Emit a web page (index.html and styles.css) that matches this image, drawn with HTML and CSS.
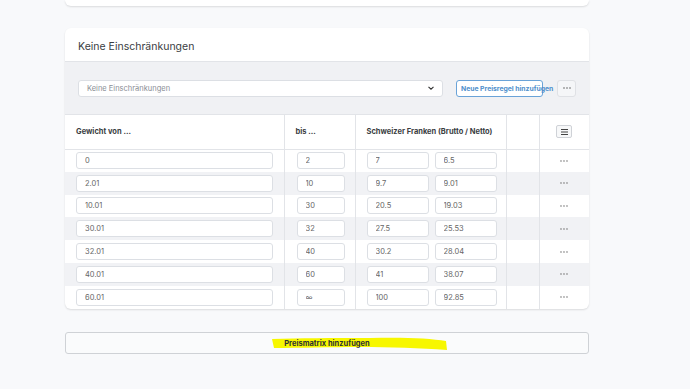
FILE: index.html
```html
<!DOCTYPE html>
<html lang="de">
<head>
    <meta charset="UTF-8">
    <title>Preismatrix</title>
    <link rel="stylesheet" href="styles.css">
</head>
<body>
    <div class="page">
        <div class="card card-prev"></div>

        <div class="card">
            <div class="card-head">Keine Einschränkungen</div>

            <div class="toolbar">
                <div class="select">
                    <span>Keine Einschränkungen</span>
                    <svg width="8" height="8" viewBox="0 0 8 8"><path d="M1.5 2.8 L4 5.2 L6.5 2.8" fill="none" stroke="#333" stroke-width="1.1"/></svg>
                </div>
                <button class="btn-outline">Neue Preisregel hinzufügen</button>
                <button class="btn-dots">
                    <svg width="8" height="2" viewBox="0 0 8 2"><circle cx="1" cy="1" r="0.7" fill="#444"/><circle cx="4" cy="1" r="0.7" fill="#444"/><circle cx="7" cy="1" r="0.7" fill="#444"/></svg>
                </button>
            </div>

            <table class="matrix">
                <thead>
                    <tr>
                        <th class="c1">Gewicht von ...</th>
                        <th class="c2">bis ...</th>
                        <th class="c3">Schweizer Franken (Brutto / Netto)</th>
                        <th class="c4"></th>
                        <th class="c5">
                            <span class="menu-btn">
                                <svg width="7" height="6" viewBox="0 0 7 6"><path d="M0 0.5H7M0 3H7M0 5.5H7" stroke="#444" stroke-width="1"/></svg>
                            </span>
                        </th>
                    </tr>
                </thead>
                <tbody id="rows"></tbody>
            </table>
        </div>

        <div class="add-wrap">
            <button class="btn-add">
                <svg class="marker" width="180" height="18" viewBox="0 0 180 18"><path d="M2 4 C 30 3, 60 3, 100 3 C 130 2, 160 3, 176 6 L 177 15 C 150 13, 120 12, 90 12 C 60 12, 30 13, 4 13 Z" fill="#f7f700"/></svg>
                <span>Preismatrix hinzufügen</span>
            </button>
        </div>
    </div>

    <script>
        const data = [
            ["0", "2", "7", "6.5"],
            ["2.01", "10", "9.7", "9.01"],
            ["10.01", "30", "20.5", "19.03"],
            ["30.01", "32", "27.5", "25.53"],
            ["32.01", "40", "30.2", "28.04"],
            ["40.01", "60", "41", "38.07"],
            ["60.01", "∞", "100", "92.85"]
        ];
        const dots = '<svg class="row-dots" width="8" height="2" viewBox="0 0 8 2"><circle cx="1" cy="1" r="0.65" fill="#555"/><circle cx="4" cy="1" r="0.65" fill="#555"/><circle cx="7" cy="1" r="0.65" fill="#555"/></svg>';
        const tbody = document.getElementById("rows");
        data.forEach(function (r) {
            const tr = document.createElement("tr");
            tr.innerHTML =
                '<td class="c1"><input value="' + r[0] + '"></td>' +
                '<td class="c2"><input value="' + r[1] + '"></td>' +
                '<td class="c3"><div class="pair"><input value="' + r[2] + '"><input value="' + r[3] + '"></div></td>' +
                '<td class="c4"></td>' +
                '<td class="c5">' + dots + '</td>';
            tbody.appendChild(tr);
        });
    </script>
</body>
</html>
```

FILE: styles.css
```css
* {
    margin: 0;
    padding: 0;
    box-sizing: border-box;
}
body {
    background-color: #f8f9fb;
    font-family: Inter, "Noto Sans", sans-serif;
    color: #333;
}
.page {
    width: 524px;
    margin-left: 65px;
}
.card {
    background-color: #fff;
    border-radius: 6px;
    box-shadow: 0 1px 2px rgba(0, 0, 0, 0.12);
    overflow: hidden;
}
.card-prev {
    height: 6px;
    border-radius: 0 0 6px 6px;
    margin-bottom: 22px;
}
.card-head {
    height: 34px;
    padding: 12px 13px 0;
    font-size: 10.5px;
    color: #3a3d42;
    border-bottom: 1px solid #e2e4e8;
}
.toolbar {
    height: 53px;
    background-color: #f0f1f4;
    display: flex;
    align-items: center;
    padding: 0 13px;
    border-bottom: 1px solid #e2e4e8;
}
.select {
    width: 365px;
    height: 17px;
    background-color: #fff;
    border: 1px solid #dcdfe4;
    border-radius: 3px;
    display: flex;
    align-items: center;
    justify-content: space-between;
    padding: 0 7px 0 8px;
    font-size: 7.5px;
    color: #8a8e95;
}
.btn-outline {
    margin-left: 13px;
    width: 87px;
    height: 17px;
    background-color: #fff;
    border: 1px solid #6aa3d8;
    border-radius: 3px;
    font-family: inherit;
    font-size: 6.8px;
    font-weight: 700;
    color: #4f8fcc;
    white-space: nowrap;
    text-align: left;
    padding-left: 4px;
    overflow: visible;
}
.btn-dots {
    margin-left: 14px;
    width: 19px;
    height: 17px;
    background-color: #f5f6f8;
    border: 1px solid #dfe1e5;
    border-radius: 3px;
    display: flex;
    align-items: center;
    justify-content: center;
}
.matrix {
    width: 100%;
    border-collapse: collapse;
}
.matrix th {
    height: 34px;
    text-align: left;
    font-size: 7.5px;
    font-weight: 700;
    color: #3a3d42;
    padding: 0 11px;
    border-bottom: 1px solid #e2e4e8;
}
.matrix th, .matrix td {
    border-right: 1px solid #e2e4e8;
}
.matrix th.c5, .matrix td.c5 {
    border-right: none;
    text-align: center;
}
.matrix td {
    height: 22.8px;
    padding: 0 11px;
}
.matrix tbody tr:nth-child(even) {
    background-color: #f1f2f5;
}
.c1 { width: 219px; }
.c2 { width: 71px; }
.c3 { width: 151px; }
.c4 { width: 33px; }
.c5 { width: 50px; }
.matrix td.c2 {
    padding: 0 10px 0 12px;
}
.matrix td.c3 {
    padding: 0 9px 0 11px;
}
.row-dots {
    display: block;
    margin: 0 auto;
}
.pair {
    display: flex;
    gap: 6px;
}
input {
    display: block;
    width: 100%;
    height: 17px;
    background-color: #fff;
    border: 1px solid #dcdfe4;
    border-radius: 3px;
    padding-left: 8px;
    font-family: inherit;
    font-size: 7.5px;
    color: #666;
}
.menu-btn {
    display: inline-flex;
    align-items: center;
    justify-content: center;
    width: 16px;
    height: 13px;
    border: 1px solid #cfd2d7;
    border-radius: 2px;
    background-color: #f7f8f9;
}
.add-wrap {
    margin-top: 21px;
}
.btn-add {
    position: relative;
    width: 100%;
    height: 22px;
    background-color: #fafbfc;
    border: 1px solid #cfd2d6;
    border-radius: 3px;
    font-family: inherit;
    font-size: 7.5px;
    font-weight: 700;
    color: #2c2f33;
}
.btn-add span {
    position: relative;
}
.marker {
    position: absolute;
    left: 204px;
    top: 2px;
}
```
